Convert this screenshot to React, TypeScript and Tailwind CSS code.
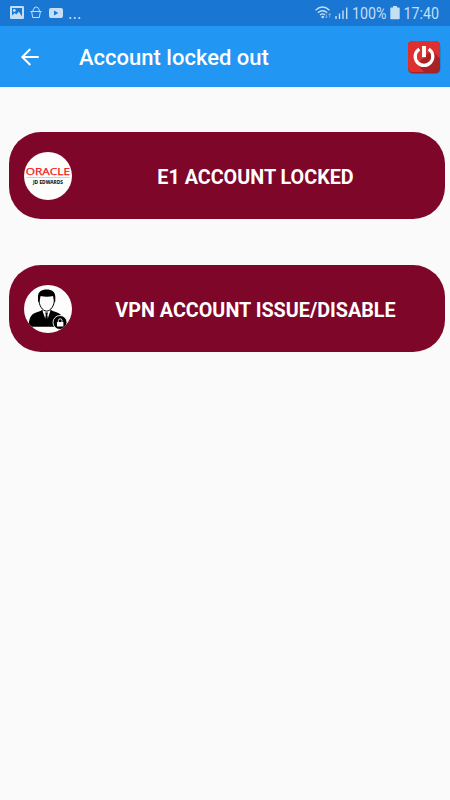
import type { ReactNode } from "react";

const OracleLogo = () => (
  <svg viewBox="0 0 48 48" className="h-full w-full">
    <text
      x="1.800"
      y="23"
      textLength="44.300"
      lengthAdjust="spacingAndGlyphs"
      stroke="#f51616"
      strokeWidth="0.250"
      className="fill-[#f51616] font-['Open_Sans',sans-serif] text-[8.400px]"
    >
      ORACLE
    </text>
    <path d="M2.500 25.500h43" stroke="#c9b9bc" strokeWidth="0.700" />
    <text
      x="24"
      y="31.500"
      textAnchor="middle"
      textLength="30"
      lengthAdjust="spacingAndGlyphs"
      className="fill-black font-['Open_Sans',sans-serif] text-[4.600px] font-bold"
    >
      JD EDWARDS
    </text>
  </svg>
);

const LockedUserIcon = () => (
  <svg viewBox="0 0 48 48" className="h-full w-full">
    <path d="M5 39c0-7 3-10.500 8.500-12 2.200-.6 4-1.300 5-2.400L22.500 33l4-8.400c1.200 1.300 3.200 1.900 5.400 2.500 5 1.400 7.500 5 7.500 11.900 0 1.700-1 2.800-3 2.800H8.500C6.500 41.800 5 40.700 5 39z" />
    <path d="M18.300 25.300l4.200 2.500 4.100-2.500-4.100 12z" fill="#fff" />
    <path d="M21.100 27.500h2.900l-.7 2.200 1.300 8.800h-4.200l1.400-8.800z" />
    <path
      d="M14.900 14.500c0-5 3-8 7.700-8s7.800 3 7.800 8c0 6-3.700 11.600-7.800 11.600s-7.700-5.600-7.700-11.600z"
      fill="#fafafa"
      stroke="#000"
      strokeWidth="1"
    />
    <path d="M14 16.500V11.500c0-4.500 3.500-7 8.700-7 5 0 8.600 2.500 8.600 7v5l-1.200.8-.9-6.300c-4 1-8.800 1-12.600 0l-1.300 6.300z" />
    <circle cx="36" cy="37.500" r="7" stroke="#fafafa" strokeWidth="0.900" />
    <rect x="33" y="37" width="6.400" height="4.600" rx="0.400" fill="#fff" />
    <path
      d="M34.400 37.100v-1.500a1.800 1.800 0 0 1 3.600 0v1.500"
      fill="none"
      stroke="#fff"
      strokeWidth="0.900"
    />
  </svg>
);

const PowerIcon = () => (
  <svg viewBox="0 -0.500 36 36" className="h-9 w-9">
    <rect x="2" y="2.500" width="32.500" height="32" rx="5" fill="#155f91" opacity=".55" />
    <rect x="2" y="1.500" width="32" height="32" rx="4.500" fill="#ac2025" />
    <rect x="2" y="1.500" width="32" height="31" rx="4.500" fill="#df3030" />
    <path
      d="M25.500 10.500L34 19v9.500a4.500 4.500 0 0 1-4.500 4.500H18.500L11 24.500z"
      fill="#a82226"
    />
    <path
      d="M13.300 9.700a8.800 8.800 0 1 0 9.400 0"
      fill="none"
      stroke="#fff"
      strokeWidth="3.300"
    />
    <path d="M18 6.500v11.200" stroke="#fff" strokeWidth="3.900" />
  </svg>
);

const NotificationIcons = () => (
  <svg viewBox="0 0 90 26" className="h-[26px] w-[90px]">
    <rect x="10" y="6" width="14" height="13" rx="1.200" fill="currentColor" />
    <path d="M12 8h10v8.500l-3.200-5-2.500 3-1.600-1.600L12 15.500z" fill="#1976d2" />
    <circle cx="14.300" cy="10.500" r="1.400" fill="currentColor" />
    <g fill="none" stroke="currentColor">
      <path d="M30.500 11.500h11M31.700 12l1 5.500h6.600l1-5.500" />
      <path d="M32.800 11.500c0-2 1.600-4.500 3.400-4.500s3.300 2.500 3.300 4.500" />
      <path d="M34.500 8.500V7M37.900 8.500V7" strokeWidth=".7" />
    </g>
    <rect x="49" y="8" width="14" height="10" rx="2" fill="currentColor" />
    <path d="M54 10.400l4.300 2.500-4.300 2.500z" fill="#1976d2" />
    <g fill="currentColor">
      <circle cx="70.300" cy="18" r="1.100" />
      <circle cx="74.800" cy="18" r="1.100" />
      <circle cx="79.300" cy="18" r="1.100" />
    </g>
  </svg>
);

const SignalIcons = () => (
  <svg viewBox="0 0 38 26" className="h-[26px] w-[38px]">
    <g fill="none" stroke="currentColor" strokeWidth="1.300">
      <path d="M2.500 10.300q7-6.500 14 0" />
      <path d="M4.800 12.800q4.700-4.200 9.400 0" />
      <path d="M7 15q2.500-2.200 5 0" />
    </g>
    <circle cx="9.700" cy="17" r="1.300" fill="currentColor" />
    <path
      d="M13.300 13.800v4m-1.300-1.300l1.300 1.300 1.300-1.300M16.700 17.600v-4m-1.300 1.300l1.300-1.300 1.300 1.300"
      fill="none"
      stroke="currentColor"
      strokeWidth=".7"
      opacity=".7"
    />
    <path
      d="M23 16v3M26.500 13.500V19M30 10.500V19M33.700 7.500V19"
      fill="none"
      stroke="currentColor"
      strokeWidth="1.400"
    />
  </svg>
);

const StatusBar = () => (
  <div className="flex h-[26px] items-center justify-between bg-[#1976d2] text-[#c4def6]">
    <NotificationIcons />
    <div className="flex h-[26px] items-center pr-[7px]">
      <SignalIcons />
      <svg viewBox="0 0 92 26" className="h-[26px] w-[92px] overflow-visible" fill="currentColor">
        <text x="1" y="19" textLength="34.500" lengthAdjust="spacingAndGlyphs" className="text-[17px]">
          100%
        </text>
        <path d="M40 7.500h2V6h4v1.500h2q.7 0 .7.700v10.300q0 .8-.7.800h-8q-.7 0-.7-.8V8.200q0-.7.700-.7z" />
        <text x="52.500" y="19" textLength="35.500" lengthAdjust="spacingAndGlyphs" className="text-[17px]">
          17:40
        </text>
      </svg>
    </div>
  </div>
);

const AccountCard = ({ icon, title }: { icon: ReactNode; title: string }) => {
  return (
    <button className="flex h-[87px] w-full items-center rounded-[32px] bg-[#7d0629] pr-[6px] pl-[15px]">
      <div className="h-[48px] w-[48px] shrink-0 overflow-hidden rounded-full bg-[#fdfdfd]">
        {icon}
      </div>
      <span className="flex-1 pt-[4px] text-center text-[19.750px] leading-6 font-bold whitespace-nowrap text-white">
        {title}
      </span>
    </button>
  );
};

export default function App() {
  return (
    <div className="h-[800px] w-[450px] bg-[#fafafa] font-[Roboto,sans-serif]">
      <StatusBar />
      <header className="flex h-[61px] items-center bg-[#2196f3] pr-[8px] pl-[20px] text-white">
        <svg viewBox="0 0 20 20" className="h-5 w-5" fill="none" stroke="currentColor" strokeWidth="2">
          <path d="M18.700 10H2.500M10.300 2L2.300 10l8 8" />
        </svg>
        <h1 className="ml-[39px] flex-1 pt-[2px] text-[22px] leading-7 font-medium">
          Account locked out
        </h1>
        <PowerIcon />
      </header>
      <main className="flex flex-col gap-[46px] pt-[45px] pr-[5px] pl-[9px]">
        <AccountCard icon={<OracleLogo />} title="E1 ACCOUNT LOCKED" />
        <AccountCard icon={<LockedUserIcon />} title="VPN ACCOUNT ISSUE/DISABLE" />
      </main>
    </div>
  );
}
